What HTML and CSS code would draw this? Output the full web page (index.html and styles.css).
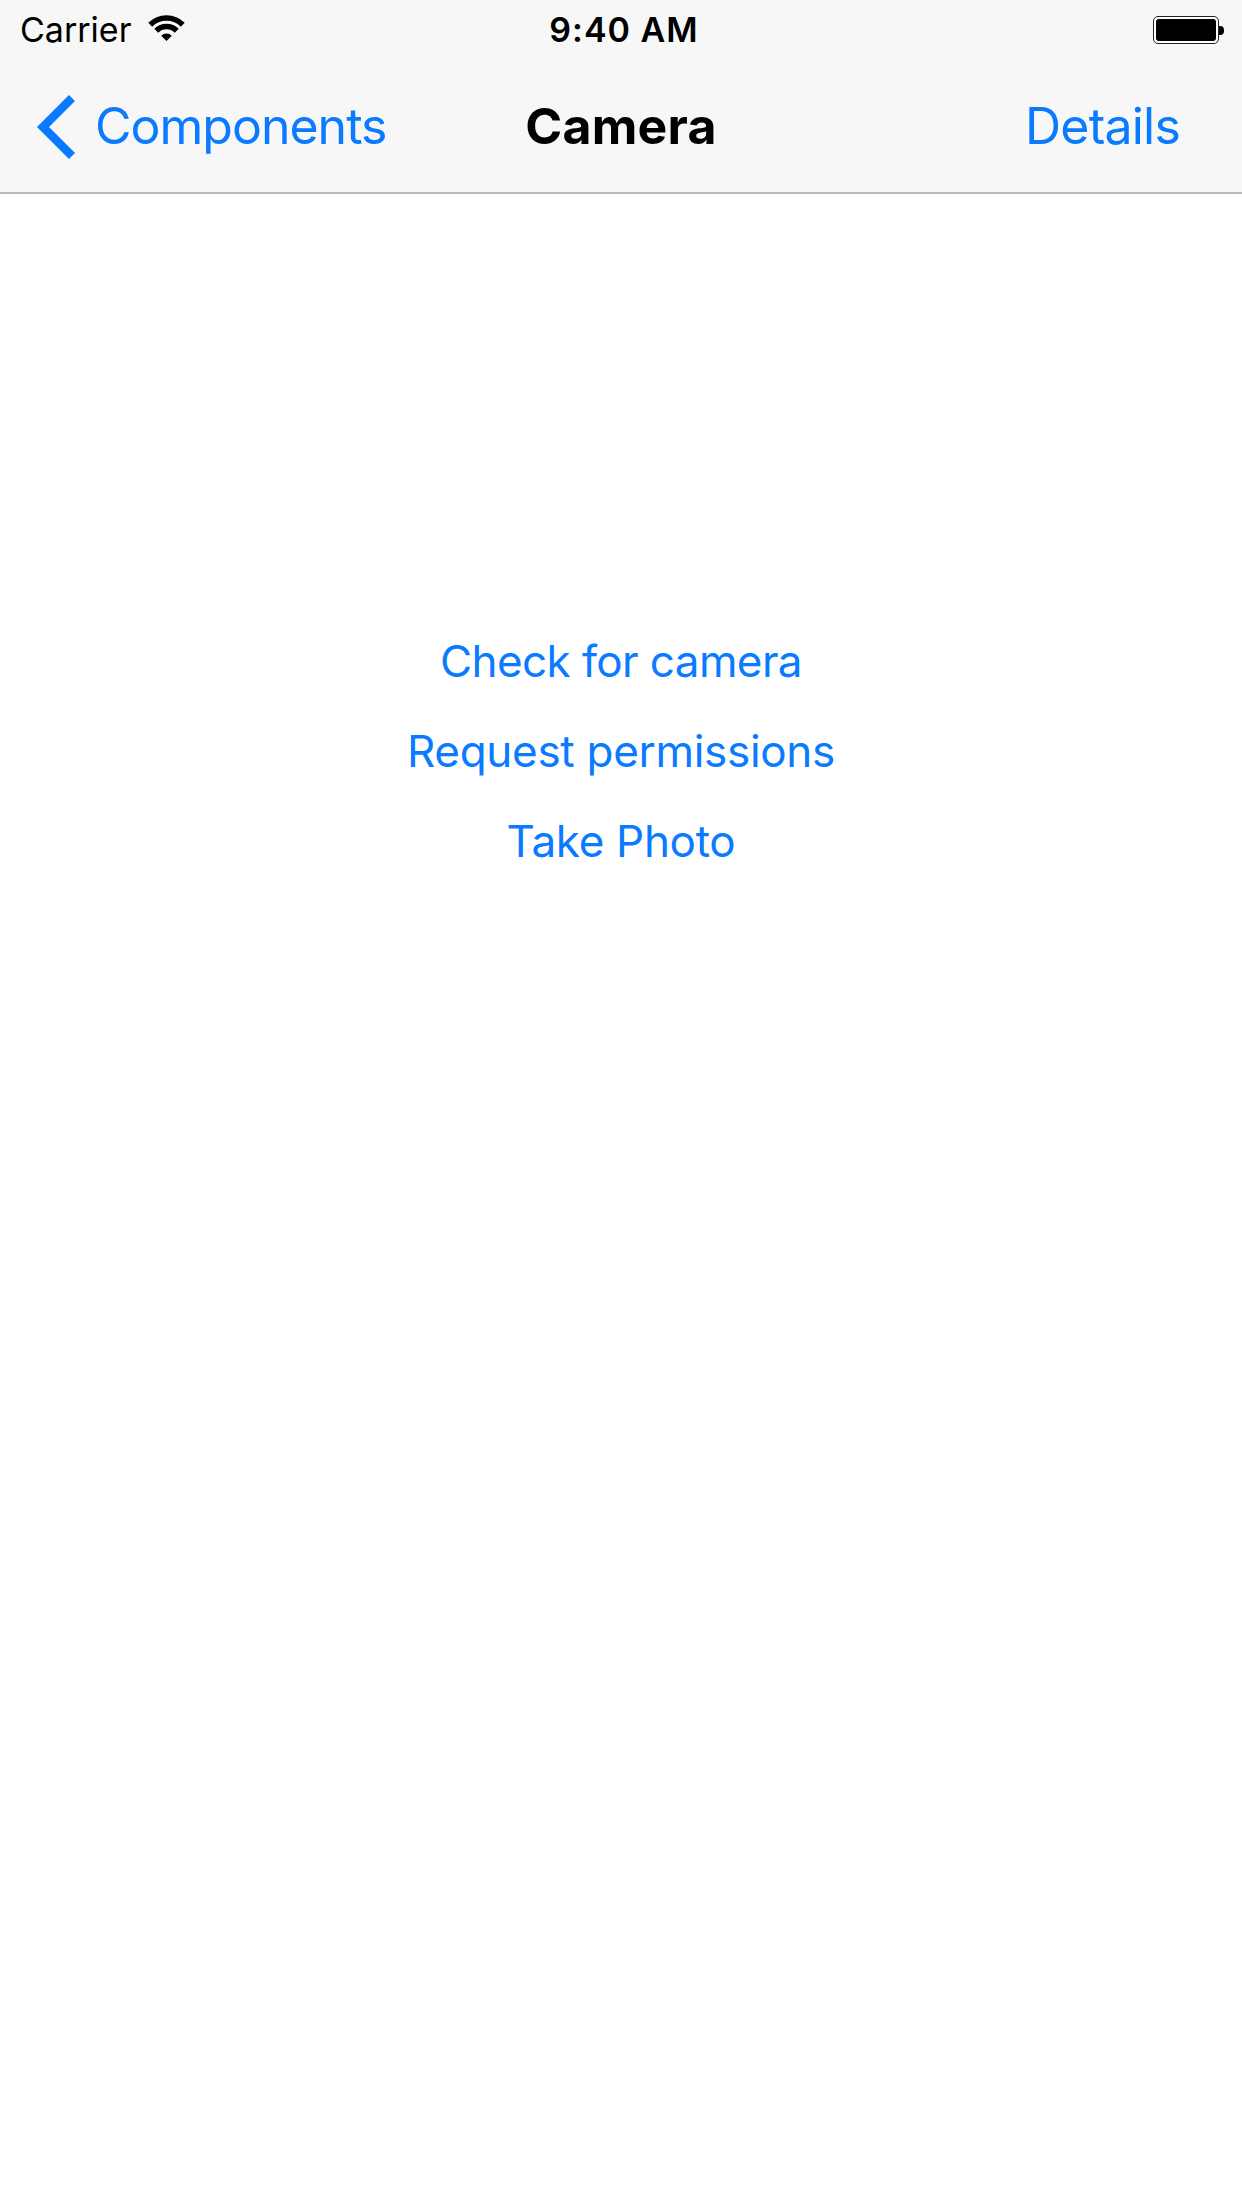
FILE: index.html
```html
<!DOCTYPE html>
<html lang="en">
<head>
<meta charset="utf-8">
<title>Camera</title>
<link rel="stylesheet" href="styles.css">
</head>
<body>
<div class="screen">
  <header class="chrome">
    <div class="status-bar">
      <div class="status-left">
        <span class="carrier">Carrier</span>
        <svg class="wifi" width="37" height="27" viewBox="0 0 37 27" aria-hidden="true">
          <path d="M2.24 10.74 A23 23 0 0 1 34.76 10.74" fill="none" stroke="#000" stroke-width="5.5"/>
          <path d="M8.25 16.75 A14.5 14.5 0 0 1 28.75 16.75" fill="none" stroke="#000" stroke-width="5.5"/>
          <path d="M18.5 27 L13.2 21.7 A7.5 7.5 0 0 1 23.8 21.7 Z" fill="#000"/>
        </svg>
      </div>
      <span class="time">9:40 AM</span>
      <div class="status-right">
        <div class="battery"><div class="battery-fill"></div></div>
        <div class="battery-nub"></div>
      </div>
    </div>
    <nav class="nav-bar">
      <a class="nav-back">
        <svg class="chevron" width="40" height="64" viewBox="0 0 40 64" aria-hidden="true">
          <polyline points="36,3 7,32 36,61" fill="none" stroke="#0a7aff" stroke-width="8.5"/>
        </svg>
        <span class="nav-back-label">Components</span>
      </a>
      <h1 class="nav-title">Camera</h1>
      <a class="nav-action">Details</a>
    </nav>
  </header>
  <main class="content">
    <div class="actions">
      <button class="action action-check">Check for camera</button>
      <button class="action action-request">Request permissions</button>
      <button class="action action-photo">Take Photo</button>
    </div>
  </main>
</div>
</body>
</html>
```

FILE: styles.css
```css
* { box-sizing: border-box; }
html, body { margin: 0; padding: 0; background: #fff; }
body { font-family: Inter, "Noto Sans", "Liberation Sans", sans-serif; color: #000; }
.screen { width: 1242px; height: 2208px; overflow: hidden; background: #fff; }

.chrome { background: #f7f7f7; border-bottom: 2px solid #b9b9b9; }

.status-bar {
  height: 60px;
  display: grid;
  grid-template-columns: 1fr auto 1fr;
  align-items: center;
  padding: 0 18px 0 20px;
}
.status-left { display: flex; align-items: center; gap: 17px; }
.carrier { font-size: 34px; line-height: 60px; font-weight: 400; }
.wifi { display: block; margin-top: -6px; }
.time { font-size: 34px; line-height: 60px; font-weight: 600; letter-spacing: 1px; margin-left: 4px; }
.status-right { display: flex; justify-content: flex-end; align-items: center; }
.battery {
  width: 66px; height: 28px;
  border: 1.5px solid #222;
  border-radius: 5px;
  padding: 2px;
  background: #fff;
}
.battery-fill { width: 100%; height: 100%; background: #000; border-radius: 3px; }
.battery-nub { width: 5px; height: 9px; background: #000; border-radius: 0 4px 4px 0; }

.nav-bar {
  height: 132px;
  display: grid;
  grid-template-columns: 1fr auto 1fr;
  align-items: center;
  padding: 0 36px;
}
.nav-back { display: flex; align-items: center; gap: 19px; color: #0a7aff; }
.chevron { display: block; margin-top: 2px; }
.nav-back-label { font-size: 50px; line-height: 132px; letter-spacing: -1px; }
.nav-title { margin: 0; font-size: 50px; line-height: 132px; font-weight: 700; letter-spacing: 0.2px; }
.nav-action { justify-self: end; margin-right: 26px; color: #0a7aff; font-size: 50px; line-height: 132px; letter-spacing: -0.8px; }

.content { padding-top: 422px; }
.actions { display: flex; flex-direction: column; align-items: center; }
.action {
  font-family: inherit;
  font-size: 44px;
  line-height: 90px;
  color: #0a7aff;
  background: none;
  border: 0;
  padding: 0;
  cursor: pointer;
}
.action-check { letter-spacing: -0.6px; }
.action-request { letter-spacing: -0.3px; }
.action-photo { letter-spacing: -0.3px; }
```
